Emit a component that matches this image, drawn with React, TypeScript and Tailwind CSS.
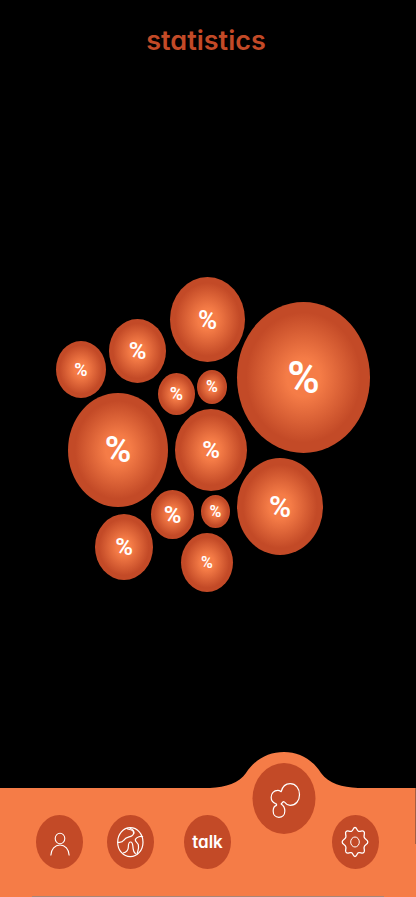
import type { ReactNode } from "react";

type Bubble = { x: number; y: number; w: number; h: number; size: string };

const bubbles: Bubble[] = [
  { x: 9, y: 65, w: 50, h: 57, size: "text-[18px]" },
  { x: 62, y: 43, w: 57, h: 64, size: "text-[24px]" },
  { x: 123, y: 1, w: 75, h: 85, size: "text-[26px]" },
  { x: 190, y: 26, w: 133, h: 151, size: "text-[44px]" },
  { x: 111, y: 97, w: 37, h: 42, size: "text-[18px]" },
  { x: 150, y: 94, w: 30, h: 34, size: "text-[16px]" },
  { x: 21, y: 117, w: 100, h: 114, size: "text-[36px]" },
  { x: 128, y: 133, w: 72, h: 82, size: "text-[24px]" },
  { x: 190, y: 182, w: 86, h: 97, size: "text-[30px]" },
  { x: 104, y: 214, w: 43, h: 49, size: "text-[24px]" },
  { x: 154, y: 219, w: 29, h: 33, size: "text-[16px]" },
  { x: 48, y: 238, w: 58, h: 66, size: "text-[24px]" },
  { x: 134, y: 257, w: 52, h: 59, size: "text-[16px]" },
];

function NavButton({ label, children }: { label: string; children: ReactNode }) {
  return (
    <button
      type="button"
      aria-label={label}
      className="flex h-[54px] w-[47px] items-center justify-center rounded-[50%] bg-[#c34a27]"
    >
      {children}
    </button>
  );
}

function PersonIcon() {
  return (
    <svg className="mt-1" width="22" height="26" viewBox="0 0 22 26" fill="none" stroke="#fff" strokeWidth="1.1">
      <ellipse cx="11" cy="7.5" rx="4.8" ry="5.3" />
      <path d="M1.8 24.5C2 18 6 14 11 14s9 4 9.2 10.500" />
    </svg>
  );
}

function GlobeIcon() {
  return (
    <svg width="29" height="33" viewBox="347 135 87 99" fill="none" stroke="#fff" strokeWidth="3.600">
      <ellipse cx="390" cy="183.500" rx="38" ry="43.500" />
      <path d="M352 184C360 185 367 184 370 178C377 167 387 169 395 164C402 160 401 151 395 148C390 145 383 146 379 142" />
      <path d="M388 141C396 144 402 150 401 158" />
      <path d="M428 168C422 164 409 168 405 175C403 182 412 184 414 191C417 202 412 211 410 219" />
      <path d="M368 216C378 214 384 208 384 198C384 188 386 183 391 183C397 183 397 190 398 199C399 207 398 213 406 219" />
    </svg>
  );
}

function MoleculeIcon() {
  return (
    <svg width="34" height="40" viewBox="37 28 102 120" fill="none" stroke="#fff" strokeWidth="3.600" strokeLinejoin="round">
      <path d="M78 66C82 50 92 42 105 42C122 42 133 56 133 75C133 93 122 107 105 107C98 107 93 104 88 97L84 96L78 103C86 108 89 114 89 124C89 135 82 143 71 143C60 143 54 134 54 124C54 115 57 109 64 107C65 104 64 103 61 102C53 99 48 92 48 83C48 71 56 62 68 62C72 62 75 64 78 66Z" />
    </svg>
  );
}

function GearIcon() {
  return (
    <svg width="28" height="32" viewBox="0 0 28 32" fill="none" stroke="#fff" strokeWidth="1.300" strokeLinejoin="round">
      <path d="M14 1.500C16 1.500 15.600 4.600 17.600 5.300C19.600 6.100 21 3.900 22.800 5.400C24.600 7.200 22.400 9 23.200 11.300C24 13.800 26.800 13.300 26.800 16C26.800 18.700 24 18.200 23.200 20.700C22.400 23 24.600 24.800 22.800 26.600C21 28.100 19.600 25.900 17.600 26.700C15.600 27.400 16 30.500 14 30.500C12 30.500 12.400 27.400 10.400 26.700C8.400 25.900 7 28.100 5.200 26.600C3.400 24.800 5.600 23 4.800 20.700C4 18.200 1.200 18.700 1.200 16C1.200 13.300 4 13.800 4.800 11.300C5.600 9 3.400 7.200 5.200 5.400C7 3.900 8.400 6.100 10.400 5.300C12.400 4.600 12 1.500 14 1.500Z" />
      <ellipse cx="14" cy="16" rx="4.300" ry="5" strokeWidth="1" />
    </svg>
  );
}

export default function App() {
  return (
    <div className="flex min-h-screen flex-col overflow-hidden bg-black font-['Inter',sans-serif] [font-feature-settings:'cv11','ss03']">
      <header className="pt-5 pr-1 text-center">
        <h1 className="text-[27px] leading-[42px] font-semibold text-[#c34a27]">statistics</h1>
      </header>

      <main className="flex flex-1 items-center justify-center pt-[18px]">
        <ul className="relative h-[316px] w-[322px]">
          {bubbles.map((b, i) => (
            <li
              key={i}
              className={`absolute flex items-center justify-center rounded-[50%] bg-[radial-gradient(closest-side,#f57c47_25%,#c34a27_86%)] font-['Roboto',sans-serif] leading-none font-semibold text-white ${b.size}`}
              style={{ left: b.x, top: b.y, width: b.w, height: b.h }}
            >
              %
            </li>
          ))}
        </ul>
      </main>

      <nav className="relative bg-[#f57c47]">
        <div className="absolute top-0 right-0 h-14 w-px bg-[#a85c3c]" />
        <div className="grid h-[108px] grid-cols-[71fr_71fr_83fr_70fr_72fr] justify-items-center pt-[27px] pr-[25px] pl-6">
          <NavButton label="Profile">
            <PersonIcon />
          </NavButton>
          <NavButton label="World">
            <GlobeIcon />
          </NavButton>
          <NavButton label="Talk">
            <span className="text-[17px] leading-6 font-semibold text-white">talk</span>
          </NavButton>
          <div className="relative w-full">
            <svg
              className="absolute bottom-full left-1/2 mb-[26px] h-[38px] w-[148px] -translate-x-1/2"
              viewBox="0 0 148 38"
              fill="#f57c47"
            >
              <path d="M0 37C16 36 29 32 36 22C45 8 59 1 74 1C89 1 102 8 111 22C119 33 132 36 148 37V38H0Z" />
            </svg>
            <button
              type="button"
              aria-label="Statistics"
              className="absolute -top-[52px] left-1/2 flex h-[71px] w-[63px] -translate-x-1/2 items-center justify-center rounded-[50%] bg-[#c34a27]"
            >
              <MoleculeIcon />
            </button>
          </div>
          <NavButton label="Settings">
            <GearIcon />
          </NavButton>
        </div>
        <div className="mx-8 h-px bg-[#a98574]" />
      </nav>
    </div>
  );
}
